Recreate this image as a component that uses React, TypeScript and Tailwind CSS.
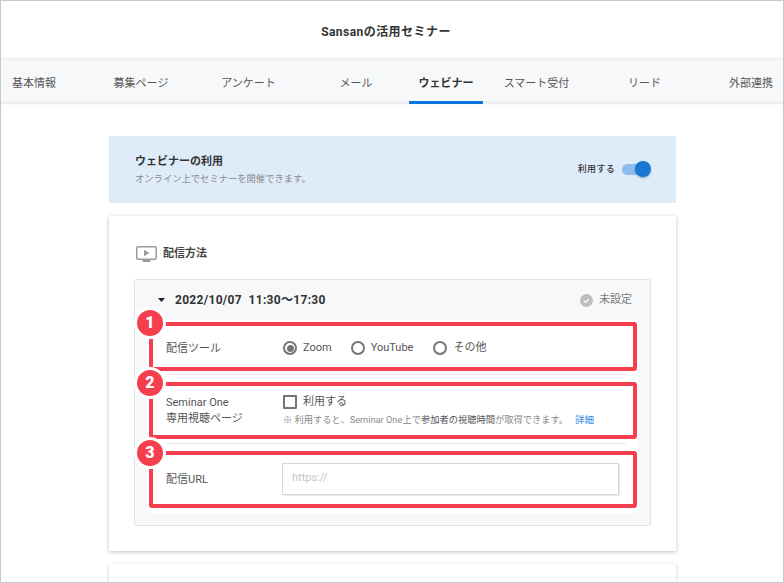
const tabs = [
  { label: "基本情報", cls: "ml-[11px] w-[44px]" },
  { label: "募集ページ", cls: "ml-[58px] w-[54px]" },
  { label: "アンケート", cls: "ml-[54px] w-[53px]" },
  { label: "メール", cls: "ml-[65px] w-[32px]" },
  { label: "ウェビナー", cls: "ml-[37px] w-[74px]", active: true },
  { label: "スマート受付", cls: "ml-[21px] w-[65px]" },
  { label: "リード", cls: "ml-[59px] w-[33px]" },
  { label: "外部連携", cls: "ml-[68px] w-[44px]" },
];

function Radio({ label, checked, cls }: { label: string; checked?: boolean; cls: string }) {
  return (
    <div className={`flex items-center gap-[6px] ${cls}`}>
      <span className="flex h-[14px] w-[14px] items-center justify-center rounded-full border-2 border-[#757575] bg-white">
        {checked && <span className="h-[7px] w-[7px] rounded-full bg-[#757575]" />}
      </span>
      <span className="text-[11px] leading-[14px] text-[#555]">{label}</span>
    </div>
  );
}

function Callout({ n, cls, badge }: { n: number; cls: string; badge: string }) {
  return (
    <>
      <div className={`pointer-events-none absolute left-[148px] w-[488px] rounded-[3px] border-4 border-[#f53f4e] ${cls}`} />
      <div
        className={`absolute left-[133px] flex h-[32px] w-[32px] items-center justify-center rounded-full border-[3px] border-white bg-[#f53f4e] text-[16px] font-black text-white ${badge}`}
      >
        {n}
      </div>
    </>
  );
}

export default function App() {
  return (
    <div className="relative h-[583px] w-[784px] overflow-hidden border border-[#c8c8c8] bg-white font-['Roboto','Noto_Sans_CJK_JP',sans-serif] text-[#444]">
      {/* Title */}
      <div className="flex h-[59px] items-center justify-center pr-[12px] pt-[2px] text-[12px] font-bold tracking-[0.45px] text-[#333]">
        Sansanの活用セミナー
      </div>

      {/* Tabs */}
      <div className="flex h-[44px] border-b-[3px] border-[#eeeeee] bg-[#f7f8fa] shadow-[0_-1px_3px_rgba(0,0,0,0.12)]">
        {tabs.map((t) => (
          <div
            key={t.label}
            className={`-mb-[3px] flex h-[44px] shrink-0 items-center justify-center whitespace-nowrap pt-[7px] text-[11px] ${t.cls} ${
              t.active ? "border-b-[3px] border-[#0b74de] font-bold text-[#333]" : "border-b-[3px] border-transparent text-[#555]"
            }`}
          >
            {t.label}
          </div>
        ))}
      </div>

      <div className="ml-[108px] w-[567px] pt-[32px]">
        {/* Banner */}
        <div className="flex h-[67px] items-center justify-between bg-[#deebf9] pl-[26px] pr-[26px]">
          <div>
            <div className="text-[11px] font-bold leading-[16px] text-[#333]">ウェビナーの利用</div>
            <div className="mt-[2px] text-[9.3px] leading-[13px] text-[#8a8a8a]">オンライン上でセミナーを開催できます。</div>
          </div>
          <div className="flex items-center gap-[7px]">
            <span className="text-[9px] font-medium tracking-[0.3px] text-[#333]">利用する</span>
            <div className="relative h-[11px] w-[28px] rounded-full bg-[#8dbbec]">
              <span className="absolute left-[13px] top-[-3px] h-[16px] w-[16px] rounded-full bg-[#1976d2] shadow-[0_1px_2px_rgba(0,0,0,0.3)]" />
            </div>
          </div>
        </div>

        {/* Card */}
        <div className="mt-[13px] h-[335px] bg-white px-[25px] pt-[30px] shadow-[0_1px_4px_rgba(0,0,0,0.25)]">
          <div className="flex h-[16px] items-center gap-[6px] pl-[2px]">
            <svg width="21" height="17" viewBox="0 0 21 17" fill="none">
              <rect x="0.75" y="0.75" width="19.5" height="12.5" rx="1.5" stroke="#9a9a9a" strokeWidth="1.5" />
              <path d="M8 3.8 L13.5 7 L8 10.2 Z" fill="#9a9a9a" />
              <rect x="6.5" y="14" width="8" height="2" fill="#9a9a9a" />
            </svg>
            <span className="text-[11px] font-bold text-[#444]">配信方法</span>
          </div>

          {/* Schedule panel */}
          <div className="mt-[17px] h-[247px] rounded-[2px] border border-[#e3e4e6] bg-[#f7f8fa] px-[12px]">
            <div className="flex h-[40px] items-center pl-[11px] pr-[6px]">
              <svg width="7" height="4" viewBox="0 0 7 4" className="mr-[10px]">
                <path d="M0 0 H7 L3.5 4 Z" fill="#222" />
              </svg>
              <span className="whitespace-pre text-[12px] font-bold tracking-[0.3px] text-[#333]">2022/10/07  11:30〜17:30</span>
              <div className="ml-auto flex items-center gap-[6px]">
                <svg width="13" height="13" viewBox="0 0 13 13">
                  <circle cx="6.5" cy="6.5" r="6.5" fill="#bdbdbd" />
                  <path d="M4 6.7 L5.8 8.4 L9 5" fill="none" stroke="#fff" strokeWidth="1.2" />
                </svg>
                <span className="text-[11px] text-[#777]">未設定</span>
              </div>
            </div>

            <div className="h-[193px] bg-white pl-[19px] pr-[12px]">
              {/* Tool */}
              <div className="flex h-[55px] items-center border-b border-[#e6e6e6] pt-[2px]">
                <div className="w-[117px] pt-[2px] text-[11px] text-[#555]">配信ツール</div>
                <Radio label="Zoom" checked cls="" />
                <Radio label="YouTube" cls="ml-[19px]" />
                <Radio label="その他" cls="ml-[20px]" />
              </div>

              {/* Seminar One */}
              <div className="flex h-[69px] items-start border-b border-[#e6e6e6] pt-[19px]">
                <div className="w-[117px] pt-[1px] text-[11px] leading-[15.5px] text-[#555]">
                  Seminar One
                  <br />
                  専用視聴ページ
                </div>
                <div>
                  <div className="flex items-center gap-[6px]">
                    <span className="h-[14px] w-[14px] rounded-[1px] border-2 border-[#757575] bg-white" />
                    <span className="pt-[1px] text-[11px] leading-[14px] text-[#555]">利用する</span>
                  </div>
                  <div className="mt-[4px] whitespace-nowrap text-[9.25px] leading-[13px] text-[#8a8a8a]">
                    ※ 利用すると、Seminar One上で<span className="text-[#555]">参加者の視聴時間</span>が取得できます。
                    <span className="ml-[7px] text-[9.5px] text-[#2f8ae0]">詳細</span>
                  </div>
                </div>
              </div>

              {/* URL */}
              <div className="flex h-[69px] items-center">
                <div className="w-[116px] pt-[4px] text-[11px] text-[#555]">配信URL</div>
                <div className="flex h-[32px] w-[337px] items-center border border-[#d6d6d6] bg-white pl-[9px] text-[11px] text-[#c4c4c4] shadow-[1px_1px_0_#ececec]">
                  https://
                </div>
              </div>
            </div>
          </div>
        </div>

        {/* Next card, cut off by the window */}
        <div className="mt-[13px] h-[40px] bg-white shadow-[0_1px_4px_rgba(0,0,0,0.2)]" />
      </div>

      <Callout n={1} cls="top-[321px] h-[49px]" badge="top-[306px]" />
      <Callout n={2} cls="top-[381px] h-[57px]" badge="top-[366px]" />
      <Callout n={3} cls="top-[450px] h-[57px]" badge="top-[436px]" />
    </div>
  );
}
